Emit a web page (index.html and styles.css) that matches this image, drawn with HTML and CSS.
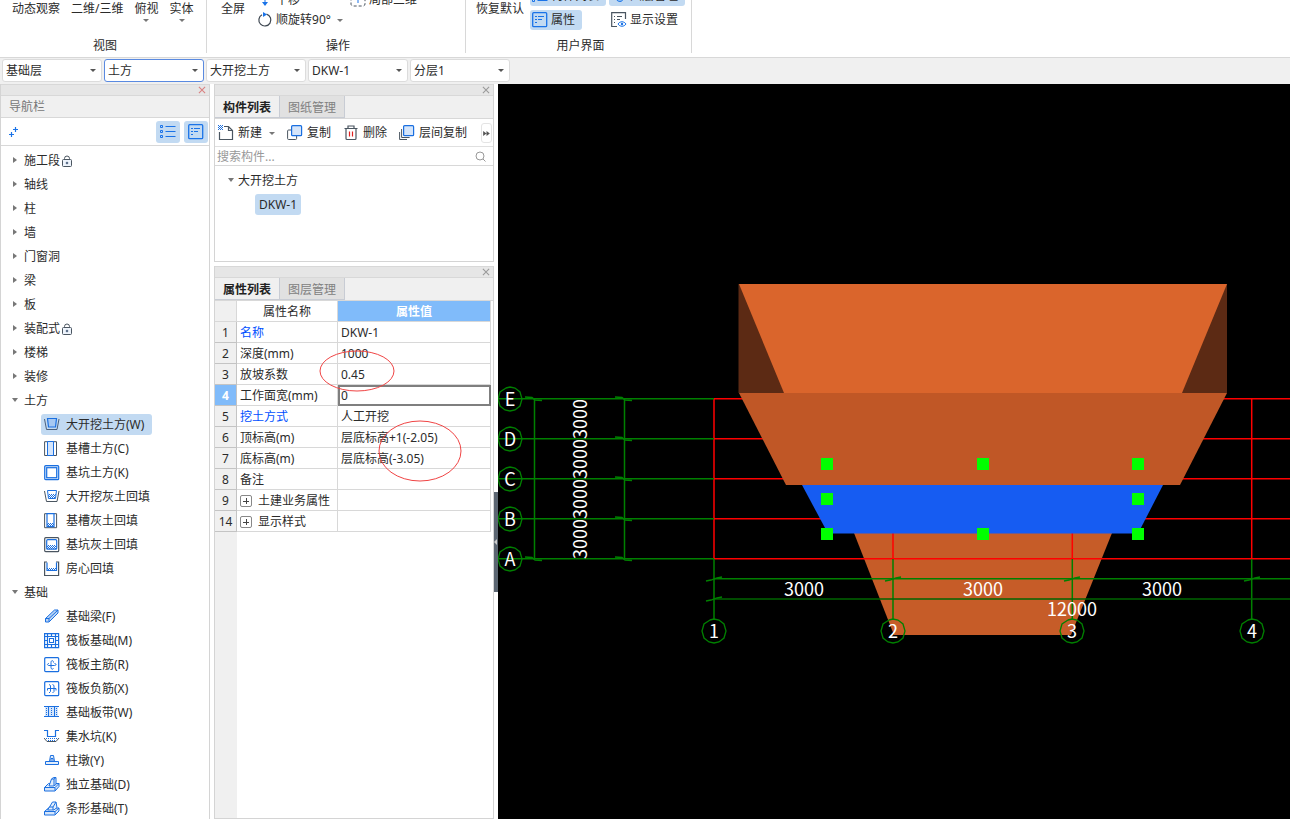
FILE: index.html
```
<!DOCTYPE html>
<html lang="zh-CN">

<head>
    <meta charset="UTF-8">
    <meta name="viewport" content="width=device-width, initial-scale=1.0">
    <title>土方建模</title>
    <link rel="stylesheet" href="styles.css">
</head>

<body>

    <!-- shared icons -->
    <svg class="sprite" aria-hidden="true">
        <defs>
            <pattern id="dots" width="2" height="2" patternUnits="userSpaceOnUse">
                <rect width="1" height="1" fill="#1a6fe0" />
                <rect x="1" y="1" width="1" height="1" fill="#1a6fe0" />
            </pattern>
        </defs>
        <symbol id="i-close" viewBox="0 0 9 9">
            <path d="M1 1l7 7M8 1l-7 7" stroke="currentColor" stroke-width="1.2" fill="none" />
        </symbol>
        <symbol id="i-lock" viewBox="0 0 10 12">
            <path d="M2.500 5V3.500a2.500 2.500 0 0 1 5 0V5" fill="none" stroke="#4a5560" />
            <rect x=".5" y="4.500" width="9" height="7" rx="1" fill="#eef4fc" stroke="#4a5560" />
            <path d="M5 6.500l1.500 1.500L5 9.500 3.500 8z" fill="#4a5f7c" />
        </symbol>
        <symbol id="i-list" viewBox="0 0 16 16">
            <g fill="none" stroke="#1a73e8">
                <path d="M5.500 2.500H15.500M5.500 7.500H15.500M5.500 12.500H15.500" />
                <path d="M.5 1.500h2v2h-2zM.5 6.500h2v2h-2zM.5 11.500h2v2h-2z" />
            </g>
        </symbol>
        <symbol id="i-panel" viewBox="0 0 16 16">
            <g fill="none" stroke="#1a73e8">
                <rect x=".7" y=".7" width="14" height="14" rx="1" stroke-width="1.300" />
                <path d="M3 4.500h2M6 4.500h6M3 7.500h2M6 7.500h4M3 10.500h2" />
            </g>
        </symbol>
        <symbol id="i-display" viewBox="0 0 16 16">
            <path d="M6 14.500H.7V.7h13.800V7" fill="none" stroke="#4a5560" stroke-width="1.200" />
            <path d="M3 4.500h1M6 4.500h5M3 7.500h1M6 7.500h3M3 10.500h1" stroke="#4a5560" />
            <path d="M7 12c2-3 6-3 8 0-2 3-6 3-8 0z" fill="#fff" stroke="#1a73e8" />
            <circle cx="11" cy="12" r="1.200" fill="#1a73e8" />
        </symbol>
        <symbol id="i-layers" viewBox="0 0 16 16">
            <path d="M4 9c2 6 8 6 9 0z" fill="#8bbcf2" stroke="#1a73e8" />
            <circle cx="8.500" cy="10" r="2" fill="#1a73e8" />
        </symbol>
        <symbol id="i-rotate" viewBox="0 0 16 16">
            <path d="M9.500 2.200a6 6 0 1 1-4.500.5" fill="none" stroke="#3d4650" stroke-width="1.200" />
            <path d="M6 0l4 2.500-4 2.500z" fill="#1a73e8" />
        </symbol>
        <symbol id="i-move" viewBox="0 0 14 16">
            <path d="M7 1v12M1 7h12" stroke="#1a73e8" fill="none" />
            <path d="M4 10h6l-3 4z" fill="#1a73e8" />
        </symbol>
        <symbol id="i-part" viewBox="0 0 16 16">
            <rect x="1" y="2" width="14" height="12" rx="2" fill="none" stroke="#4a5560" stroke-dasharray="3 2" />
            <path d="M8 6v5" stroke="#1a73e8" fill="none" />
        </symbol>
        <symbol id="i-new" viewBox="0 0 16 16">
            <path d="M6 1.500H10.500l4 4v9H1.500V7M10.500 1.500v4h4" fill="none" stroke="#4a5560" stroke-width="1.200" />
            <rect width="5" height="5" fill="url(#dots)" />
        </symbol>
        <symbol id="i-copy" viewBox="0 0 16 16">
            <rect x=".6" y="5" width="9" height="9.500" rx="1" fill="#fff" stroke="#4a5560" />
            <rect x="4.600" y=".7" width="10" height="10" rx="1" fill="#d5e5fa" stroke="#1a6fe0" stroke-width="1.200" />
        </symbol>
        <symbol id="i-delete" viewBox="0 0 16 16">
            <path d="M1.500 3.500h13M5 3.500V1h6v2.500M3 3.500v10q0 1 1 1h8q1 0 1-1v-10" fill="none" stroke="#4a5560" stroke-width="1.200" />
            <path d="M6.500 6.500v5M9.500 6.500v5" stroke="#e02020" stroke-width="1.200" />
        </symbol>
        <symbol id="i-floors" viewBox="0 0 16 16">
            <path d="M.6 7v7.500H8M2.600 4v8.500h8" fill="none" stroke="#4a5560" />
            <rect x="4.600" y=".7" width="10" height="10" rx="1" fill="#d5e5fa" stroke="#1a6fe0" stroke-width="1.200" />
        </symbol>
        <symbol id="i-search" viewBox="0 0 11 11">
            <circle cx="5" cy="5" r="4" fill="none" stroke="#999" />
            <path d="M8 8l2.500 2.500" stroke="#999" />
        </symbol>

        <symbol id="i-pit-open" viewBox="0 0 16 16">
            <path d="M.5 2l2 10.500h10.500l2-10.500" fill="none" stroke="#4a5f7c" />
            <path d="M3.500 1.500h9l-1 8.500h-7z" fill="#a6c8f2" stroke="#1a6fe0" stroke-width="1.200" />
        </symbol>
        <symbol id="i-trench" viewBox="0 0 16 16">
            <path d="M4 .7H.6v13.800H4M9 .7h3.500v13.800H9" fill="none" stroke="#4a5560" />
            <path d="M3.500 .5h6v14h-6z" fill="#d5e5fa" stroke="#1a6fe0" />
        </symbol>
        <symbol id="i-pit" viewBox="0 0 16 16">
            <rect x=".7" y=".7" width="14" height="14" rx="1" fill="#d5e5fa" stroke="#1a6fe0" stroke-width="1.200" />
            <rect x="2.700" y="2.700" width="10" height="10" fill="#fff" stroke="#1a6fe0" stroke-width="1.200" />
        </symbol>
        <symbol id="i-fill-open" viewBox="0 0 16 16">
            <path d="M.5 2l2 10.500h10.500l2-10.500" fill="none" stroke="#4a5560" />
            <path d="M3.500 1.500h9l-1 8h-7z" fill="#fff" stroke="#1a6fe0" />
            <path d="M4 5h8l-1 4H5z" fill="url(#dots)" />
        </symbol>
        <symbol id="i-fill-trench" viewBox="0 0 16 16">
            <path d="M3 .7H.6v14h12V.7H10" fill="none" stroke="#4a5560" />
            <path d="M3 .7v13h7V.7z" fill="none" stroke="#1a6fe0" stroke-width="1.200" />
            <rect x="3" y="10" width="7" height="4" fill="url(#dots)" />
        </symbol>
        <symbol id="i-fill-pit" viewBox="0 0 16 16">
            <rect x=".7" y=".7" width="14" height="14" rx="1" fill="none" stroke="#4a5560" stroke-width="1.200" />
            <rect x="2.700" y="2.700" width="10" height="9.500" rx="1" fill="none" stroke="#1a6fe0" stroke-width="1.200" />
            <rect x="3" y="8" width="9" height="4" fill="url(#dots)" />
        </symbol>
        <symbol id="i-room" viewBox="0 0 16 16">
            <path d="M3 1H.6v13.500h14V1H12" fill="none" stroke="#4a5560" stroke-width="1.200" />
            <path d="M3 1.500v8h9.500v-8" fill="none" stroke="#1a6fe0" stroke-width="1.200" />
            <rect x="3" y="7" width="9" height="3" fill="url(#dots)" />
        </symbol>
        <symbol id="i-beam" viewBox="0 0 16 16">
            <path d="M1.500 9.500l9-8.500h3.500v3l-9 9H1.500z" fill="#b9d4f6" stroke="#1a6fe0" />
            <path d="M1.500 9.500H5v3M5 9.500l9-8.500" fill="none" stroke="#1a6fe0" />
        </symbol>
        <symbol id="i-raft" viewBox="0 0 16 16">
            <path d="M.6 .6h14v14h-14zM3.500 .6v14M11.500 .6v14M.6 3.500h14M.6 11.500h14M7.500 .6v3M7.500 11.500v3M.6 7.500h3M11.500 7.500h3" fill="#fff" stroke="#1a6fe0" stroke-width="1.200" />
            <rect x="5.500" y="5.500" width="4" height="4" fill="#fff" stroke="#1a6fe0" />
        </symbol>
        <symbol id="i-main-bar" viewBox="0 0 16 16">
            <g fill="none" stroke="#1a6fe0">
                <rect x=".7" y=".7" width="14" height="14" rx="1" stroke-width="1.200" />
                <path d="M5 6.500C3 6.500 3 8.500 5 8.500h5.500c2 0 2-2 0-2M9.500 5.500c0-2.500-2.500-2.500-2.500 0v5c0 2 2 2 2.500 1" />
            </g>
        </symbol>
        <symbol id="i-neg-bar" viewBox="0 0 16 16">
            <g fill="none" stroke="#1a6fe0">
                <rect x=".7" y=".7" width="14" height="14" rx="1" stroke-width="1.200" />
                <path d="M3.500 9.500v-2h8.500v2M5 3.500l1.500 1v6L5 12M8.500 3.500l1.500 1v6L8.500 12" />
            </g>
        </symbol>
        <symbol id="i-strip" viewBox="0 0 16 16">
            <rect x="1" y="2" width="13" height="10" fill="#d5e5fa" />
            <path d="M0 1.500h15M0 11.500h15M4.500 1.500v10M10.500 1.500v10" stroke="#1a6fe0" />
            <path d="M2.500 3v8M7.500 3v8M12.500 3v8" stroke="#1a6fe0" stroke-dasharray="1 1" />
        </symbol>
        <symbol id="i-sump" viewBox="0 0 16 16">
            <path d="M0 1.500h3.500v6h8v-6H15" fill="none" stroke="#1a6fe0" stroke-width="1.200" />
            <path d="M0 9l3 3.500h9l3-3.500" fill="none" stroke="#4a5560" />
            <path d="M2 9.500h11M4 11.500h7" stroke="#1a6fe0" stroke-dasharray="1 1" />
        </symbol>
        <symbol id="i-pier" viewBox="0 0 16 16">
            <path d="M1.500 8.500h13v3h-13zM5.500 8.500l1-6h3l1 6M7 5.500h2v3H7z" fill="#e3eefb" stroke="#1a6fe0" />
        </symbol>
        <symbol id="i-isolated" viewBox="0 0 16 16">
            <path d="M.5 10.500l4-4H15v3l-4 4.500H.5zM.5 10.500H11l4-4M11 10.500v3" fill="#d5e5fa" stroke="#1a6fe0" />
            <path d="M5 9l2.500-7 2-1.500H12v7L9.500 9zM7.500 2h2.500v7M10 2L12 .5" fill="#e3eefb" stroke="#1a6fe0" />
        </symbol>
        <symbol id="i-strip-base" viewBox="0 0 16 16">
            <path d="M.5 10.500l4-3.500H15v3l-4 4H.5zM.5 10.500H11L15 7M11 10.500v3" fill="#d5e5fa" stroke="#1a6fe0" />
            <path d="M3.500 9l2-3 3-5H12l1 5.500L10 9zM5.500 6H9v3M9 6l3-5" fill="#e3eefb" stroke="#1a6fe0" />
        </symbol>
    </svg>

    <header class="ribbon">
        <section class="group group-view">
            <div class="group-body">
                <button class="tall">动态观察</button>
                <button class="tall">二维/三维</button>
                <button class="tall">俯视<span class="caret"></span></button>
                <button class="tall">实体<span class="caret"></span></button>
            </div>
            <h2>视图</h2>
        </section>
        <section class="group group-action">
            <div class="group-body">
                <button class="tall">全屏</button>
                <div class="tools">
                    <div class="tool-row">
                        <button class="tool tool-move"><svg class="icon"><use href="#i-move" /></svg>平移</button>
                        <button class="tool"><svg class="icon"><use href="#i-part" /></svg>局部三维</button>
                    </div>
                    <div class="tool-row">
                        <button class="tool"><svg class="icon"><use href="#i-rotate" /></svg>顺旋转90°<span class="caret"></span></button>
                    </div>
                </div>
            </div>
            <h2>操作</h2>
        </section>
        <section class="group group-ui">
            <div class="group-body">
                <button class="tall">恢复默认</button>
                <div class="toggles">
                    <button class="tool on"><svg class="icon"><use href="#i-list" /></svg>构件列表</button>
                    <button class="tool on"><svg class="icon"><use href="#i-layers" /></svg>图层管理</button>
                    <button class="tool on"><svg class="icon"><use href="#i-panel" /></svg>属性</button>
                    <button class="tool"><svg class="icon"><use href="#i-display" /></svg>显示设置</button>
                </div>
            </div>
            <h2>用户界面</h2>
        </section>
    </header>

    <div class="selectors">
        <label class="picker"><select aria-label="楼层"><option>基础层</option></select></label>
        <label class="picker active"><select aria-label="构件大类"><option>土方</option></select></label>
        <label class="picker"><select aria-label="构件类型"><option>大开挖土方</option></select></label>
        <label class="picker"><select aria-label="构件"><option>DKW-1</option></select></label>
        <label class="picker"><select aria-label="分层"><option>分层1</option></select></label>
    </div>

    <main class="workspace">

        <nav class="navigator">
            <div class="strip"><button class="close close-red" aria-label="关闭"><svg><use href="#i-close" /></svg></button></div>
            <h3>导航栏</h3>
            <div class="nav-tools">
                <button class="add" aria-label="展开"><svg viewBox="0 0 10 10"><path d="M0 7.500h5M2.500 5v5M4 2.500h5M6.500 0v5" stroke="#1a73e8" stroke-width="1.200" /></svg></button>
                <button class="view on" aria-label="列表"><svg class="icon"><use href="#i-list" /></svg></button>
                <button class="view on" aria-label="面板"><svg class="icon"><use href="#i-panel" /></svg></button>
            </div>
            <ul class="tree">
                <li><button class="node">施工段<svg class="lock"><use href="#i-lock" /></svg></button></li>
                <li><button class="node">轴线</button></li>
                <li><button class="node">柱</button></li>
                <li><button class="node">墙</button></li>
                <li><button class="node">门窗洞</button></li>
                <li><button class="node">梁</button></li>
                <li><button class="node">板</button></li>
                <li><button class="node">装配式<svg class="lock"><use href="#i-lock" /></svg></button></li>
                <li><button class="node">楼梯</button></li>
                <li><button class="node">装修</button></li>
                <li>
                    <button class="node open">土方</button>
                    <ul>
                        <li><button class="leaf on"><svg class="icon"><use href="#i-pit-open" /></svg>大开挖土方(W)</button></li>
                        <li><button class="leaf"><svg class="icon"><use href="#i-trench" /></svg>基槽土方(C)</button></li>
                        <li><button class="leaf"><svg class="icon"><use href="#i-pit" /></svg>基坑土方(K)</button></li>
                        <li><button class="leaf"><svg class="icon"><use href="#i-fill-open" /></svg>大开挖灰土回填</button></li>
                        <li><button class="leaf"><svg class="icon"><use href="#i-fill-trench" /></svg>基槽灰土回填</button></li>
                        <li><button class="leaf"><svg class="icon"><use href="#i-fill-pit" /></svg>基坑灰土回填</button></li>
                        <li><button class="leaf"><svg class="icon"><use href="#i-room" /></svg>房心回填</button></li>
                    </ul>
                </li>
                <li>
                    <button class="node open">基础</button>
                    <ul>
                        <li><button class="leaf"><svg class="icon"><use href="#i-beam" /></svg>基础梁(F)</button></li>
                        <li><button class="leaf"><svg class="icon"><use href="#i-raft" /></svg>筏板基础(M)</button></li>
                        <li><button class="leaf"><svg class="icon"><use href="#i-main-bar" /></svg>筏板主筋(R)</button></li>
                        <li><button class="leaf"><svg class="icon"><use href="#i-neg-bar" /></svg>筏板负筋(X)</button></li>
                        <li><button class="leaf"><svg class="icon"><use href="#i-strip" /></svg>基础板带(W)</button></li>
                        <li><button class="leaf"><svg class="icon"><use href="#i-sump" /></svg>集水坑(K)</button></li>
                        <li><button class="leaf"><svg class="icon"><use href="#i-pier" /></svg>柱墩(Y)</button></li>
                        <li><button class="leaf"><svg class="icon"><use href="#i-isolated" /></svg>独立基础(D)</button></li>
                        <li><button class="leaf"><svg class="icon"><use href="#i-strip-base" /></svg>条形基础(T)</button></li>
                    </ul>
                </li>
            </ul>
        </nav>

        <div class="side">
            <section class="panel">
                <div class="strip"><button class="close" aria-label="关闭"><svg><use href="#i-close" /></svg></button></div>
                <div class="tabs">
                    <button class="tab current">构件列表</button>
                    <button class="tab">图纸管理</button>
                </div>
                <div class="toolbar">
                    <button><svg class="icon"><use href="#i-new" /></svg>新建<span class="caret"></span></button>
                    <button><svg class="icon"><use href="#i-copy" /></svg>复制</button>
                    <button><svg class="icon"><use href="#i-delete" /></svg>删除</button>
                    <button><svg class="icon"><use href="#i-floors" /></svg>层间复制</button>
                    <button class="more" aria-label="更多"><svg viewBox="0 0 8 6"><path d="M0 0l4 3-4 3zM4 0l4 3-4 3z" fill="#555" /></svg></button>
                </div>
                <div class="search">
                    <input type="text" aria-label="搜索构件" placeholder="搜索构件...">
                    <svg><use href="#i-search" /></svg>
                </div>
                <ul class="components">
                    <li><button class="node open">大开挖土方</button></li>
                    <li><button class="item on">DKW-1</button></li>
                </ul>
            </section>

            <section class="panel properties">
                <div class="strip"><button class="close" aria-label="关闭"><svg><use href="#i-close" /></svg></button></div>
                <div class="tabs">
                    <button class="tab current">属性列表</button>
                    <button class="tab">图层管理</button>
                </div>
                <div class="grid">
                    <table>
                        <colgroup>
                            <col class="col-no">
                            <col class="col-name">
                            <col>
                        </colgroup>
                        <thead>
                            <tr><th></th><th>属性名称</th><th class="value-head">属性值</th></tr>
                        </thead>
                        <tbody>
                            <tr><th>1</th><td class="key">名称</td><td>DKW-1</td></tr>
                            <tr><th>2</th><td>深度(mm)</td><td>1000</td></tr>
                            <tr><th>3</th><td>放坡系数</td><td>0.45</td></tr>
                            <tr class="editing"><th>4</th><td><label for="workWidth">工作面宽(mm)</label></td><td><input id="workWidth" type="text" value="0"></td></tr>
                            <tr><th>5</th><td class="key">挖土方式</td><td>人工开挖</td></tr>
                            <tr><th>6</th><td>顶标高(m)</td><td>层底标高+1(-2.05)</td></tr>
                            <tr><th>7</th><td>底标高(m)</td><td>层底标高(-3.05)</td></tr>
                            <tr><th>8</th><td>备注</td><td></td></tr>
                            <tr><th>9</th><td><button class="expand" aria-label="展开"></button>土建业务属性</td><td></td></tr>
                            <tr><th>14</th><td><button class="expand" aria-label="展开"></button>显示样式</td><td></td></tr>
                        </tbody>
                    </table>
                </div>
                <svg class="marks" aria-hidden="true">
                    <ellipse cx="142" cy="105" rx="37" ry="20" />
                    <ellipse cx="205" cy="185" rx="41" ry="30" />
                </svg>
            </section>
        </div>

        <div class="splitter"><button aria-label="收起"></button></div>

        <section class="view3d">
            <svg class="scene" role="img" aria-label="三维视图">
                <defs>
                    <path id="bubble" d="M-4 -11L0 -12L5 -11L10 -7L12 0L10 7L5 11L0 12L-5 11L-10 7L-12 0L-10 -7Z" />
                    <path id="tick-v" d="M-9 -2L-2 -1.500L1 1L8 1.500" />
                    <path id="tick-h" d="M-8 2L-3 1L3 -1L8 -2" />
                </defs>
                <g transform="translate(-498 -84)">
                    <path class="lower" d="M854 533H1112L1071 635H894z" />

                    <g class="red">
                        <path d="M714 398.700H2600M714 438.700H2600M714 478.700H2600M714 518.700H2600M714 558.700H2600" />
                        <path d="M714 399V559M893 399V559M1072.300 399V559M1251.700 399V559" />
                    </g>

                    <path class="shade" d="M738.500 284H1227V393H738.500z" />
                    <path class="back" d="M739 284H1227L1182 393H784z" />
                    <path class="front" d="M739 393H1227L1180 485H786z" />
                    <path class="picked" d="M802 485H1163L1138 533.500H828z" />

                    <g class="green">
                        <path d="M498 398.700H714M498 438.700H714M498 478.700H714M498 518.700H714M498 558.700H714" />
                        <path d="M534.500 399V559M624.500 399V559" />
                        <path d="M714 559V619M893 559V619M1072.300 559V619M1251.700 559V619" />
                        <path d="M714 578.700H2600" />
                        <path class="dim" d="M714 599H2600" />
                    </g>
                    <g class="ticks">
                        <use href="#tick-v" x="534" y="399" /><use href="#tick-v" x="534" y="559" />
                        <use href="#tick-v" x="624" y="399" /><use href="#tick-v" x="624" y="439" />
                        <use href="#tick-v" x="624" y="479" /><use href="#tick-v" x="624" y="519" />
                        <use href="#tick-v" x="624" y="559" />
                        <use href="#tick-h" x="714" y="579" /><use href="#tick-h" x="893" y="579" />
                        <use href="#tick-h" x="1072" y="579" /><use href="#tick-h" x="1252" y="579" />
                        <use href="#tick-h" x="714" y="599" />
                        <use href="#bubble" x="510" y="399" /><use href="#bubble" x="510" y="439" />
                        <use href="#bubble" x="510" y="479" /><use href="#bubble" x="510" y="519" />
                        <use href="#bubble" x="510" y="559" />
                        <use href="#bubble" x="714" y="631" /><use href="#bubble" x="893" y="631" />
                        <use href="#bubble" x="1072" y="631" /><use href="#bubble" x="1252" y="631" />
                    </g>

                    <g class="labels">
                        <text x="510" y="406">E</text>
                        <text x="510" y="446">D</text>
                        <text x="510" y="486">C</text>
                        <text x="510" y="526">B</text>
                        <text x="510" y="566">A</text>
                        <text x="714" y="638">1</text>
                        <text x="893" y="638">2</text>
                        <text x="1072" y="638">3</text>
                        <text x="1252" y="638">4</text>
                        <text x="804" y="596">3000</text>
                        <text x="983" y="596">3000</text>
                        <text x="1162" y="596">3000</text>
                        <text x="1072" y="616">12000</text>
                        <text transform="translate(587 419) rotate(-90)">3000</text>
                        <text transform="translate(587 459) rotate(-90)">3000</text>
                        <text transform="translate(587 499) rotate(-90)">3000</text>
                        <text transform="translate(587 539) rotate(-90)">3000</text>
                    </g>

                    <path class="grips" d="M821 458h12v12h-12zM977 458h12v12h-12zM1132 458h12v12h-12zM821 493h12v12h-12zM1132 493h12v12h-12zM821 528h12v12h-12zM977 528h12v12h-12zM1132 528h12v12h-12z" />
                </g>
            </svg>
        </section>
    </main>

</body>

</html>
```
FILE: styles.css
```
*, *::before, *::after {
    box-sizing: border-box;
}

body {
    margin: 0;
    height: 100vh;
    overflow: hidden;
    display: flex;
    flex-direction: column;
    background: #fff;
    color: #2b2b2b;
    font-family: "Noto Sans", "Noto Sans CJK SC", sans-serif;
    font-size: 12px;
    line-height: 20px;
}

button, input, select {
    font: inherit;
    color: inherit;
    margin: 0;
    padding: 0;
    border: none;
    background: none;
    white-space: nowrap;
}

ul {
    list-style: none;
    margin: 0;
    padding: 0;
}

h2, h3 {
    margin: 0;
    font-size: 12px;
    font-weight: normal;
}

.sprite {
    position: absolute;
    width: 0;
    height: 0;
}

.icon {
    width: 16px;
    height: 16px;
    flex: none;
}

.caret {
    border: 3px solid transparent;
    border-top-color: #777;
    border-bottom: none;
}

.on {
    background: #c2daf2;
    border-radius: 3px;
}

/* ribbon, scrolled so that only the lower rows show */

.ribbon {
    flex: none;
    display: flex;
    height: 58px;
    overflow: hidden;
    border-bottom: 1px solid #d8d8d8;
}

.group {
    display: flex;
    flex-direction: column;
    justify-content: flex-end;
    margin-bottom: 4px;
    border-right: 1px solid #d8d8d8;
}

.group h2 {
    flex: none;
    text-align: center;
    padding-left: 4px;
    margin-bottom: -3px;
}

.group-body {
    display: flex;
    height: 56px;
    flex: none;
    align-items: flex-end;
    padding-bottom: 6px;
}

.group-view {
    width: 207px;
}

.group-view .group-body {
    gap: 11px;
    padding-left: 12px;
}

.group-action {
    width: 259px;
}

.group-action .group-body {
    gap: 12px;
    padding-left: 14px;
}

.group-ui {
    width: 226px;
}

.group-ui .group-body {
    gap: 6px;
    padding-left: 10px;
}

.tall {
    height: 31px;
    display: flex;
    flex-direction: column;
    align-items: center;
}

.tools {
    display: flex;
    flex-direction: column;
}

.tool-row {
    display: flex;
}

.tool {
    display: flex;
    align-items: center;
    gap: 3px;
    height: 20px;
}

.tool .caret {
    margin-left: 3px;
}

.tool-move {
    width: 93px;
}

.toggles {
    display: grid;
    grid-template-columns: 76px 76px;
    gap: 4px 3px;
}

.toggles .tool {
    justify-self: start;
    padding: 0 7px 0 2px;
}

/* floor and component selectors */

.selectors {
    flex: none;
    display: flex;
    gap: 2px;
    height: 26px;
    padding: 1px 2px;
    background: #f0f0f0;
}

.picker {
    position: relative;
    width: 100px;
    height: 23px;
}

.picker select {
    appearance: none;
    width: 100%;
    height: 100%;
    padding-left: 3px;
    background: #fff;
    border: 1px solid #dcdcdc;
    border-radius: 3px;
}

.picker.active select {
    border-color: #5a8ae0;
}

.picker::after {
    content: "";
    position: absolute;
    top: 10px;
    right: 6px;
    border: 3px solid transparent;
    border-top-color: #555;
    border-bottom: none;
    pointer-events: none;
}

/* work area */

.workspace {
    flex: 1;
    min-height: 0;
    display: flex;
}

.strip {
    flex: none;
    display: flex;
    justify-content: flex-end;
    height: 12px;
    background: #e6e6e6;
    border-top: 1px solid #d8d8d8;
    border-bottom: 1px solid #d8d8d8;
}

.close {
    width: 14px;
    height: 10px;
    display: flex;
    align-items: center;
    justify-content: center;
    color: #999;
}

.close svg {
    width: 8px;
    height: 8px;
}

.close-red {
    color: #d98080;
}

.navigator {
    flex: none;
    width: 210px;
    margin-right: 4px;
    display: flex;
    flex-direction: column;
    border: 1px solid #d4d4d4;
    border-width: 0 1px;
    overflow: hidden;
}

.navigator h3 {
    flex: none;
    height: 22px;
    padding-left: 8px;
    background: #f0f0f0;
    border-bottom: 1px solid #d8d8d8;
    color: #777;
    line-height: 22px;
}

.nav-tools {
    flex: none;
    display: flex;
    align-items: center;
    gap: 4px;
    height: 28px;
    padding: 0 1px 0 8px;
    border-bottom: 1px solid #d8d8d8;
}

.add {
    margin-right: auto;
    display: flex;
}

.add svg {
    width: 10px;
    height: 10px;
}

.view {
    display: flex;
    align-items: center;
    justify-content: center;
    width: 24px;
    height: 22px;
}

.tree {
    padding-top: 2px;
}

.node, .leaf {
    display: flex;
    align-items: center;
    height: 24px;
}

.node {
    gap: 2px;
    padding: 2px 0 0 12px;
}

.node::before {
    content: "";
    margin: 0 5px 2px 0;
    border: 3px solid transparent;
    border-left: 4px solid #777;
    border-right: none;
}

.node.open::before {
    margin: 0 4px 2px -1px;
    border: 3px solid transparent;
    border-top: 4px solid #777;
    border-bottom: none;
}

.lock {
    width: 10px;
    height: 12px;
}

.leaf {
    gap: 6px;
    height: 21px;
    margin: 0 0 3px 40px;
    padding: 0 8px 0 3px;
}

.tree ul {
    padding-top: 2px;
    margin-bottom: -2px;
}

.side {
    flex: none;
    width: 280px;
    display: flex;
    flex-direction: column;
    gap: 4px;
}

.panel {
    border: 1px solid #d4d4d4;
    border-top: none;
}

.tabs {
    display: flex;
    height: 23px;
    background: #f0f0f0;
    border-bottom: 1px solid #d8d8d8;
}

.tab {
    width: 65px;
    padding-top: 2px;
    background: #e1e1e1;
    border: 1px solid #c8ccd4;
    border-left: none;
    border-top: none;
    color: #808080;
}

.tab.current {
    background: #f0f0f0;
    color: #222;
    font-weight: bold;
}

.toolbar {
    display: flex;
    align-items: center;
    gap: 12px;
    height: 28px;
    padding: 1px 0 0 3px;
    border-bottom: 1px solid #e0e0e0;
}

.toolbar button {
    display: flex;
    align-items: center;
    gap: 4px;
}

.toolbar .caret {
    margin-left: 3px;
}

.toolbar .more {
    justify-content: center;
    width: 11px;
    height: 20px;
    margin: 0 1px 0 auto;
    border: 1px solid #e4e4e4;
    border-radius: 3px;
}

.more svg {
    width: 7px;
    height: 5px;
    flex: none;
}

.search {
    display: flex;
    align-items: center;
    height: 19px;
    padding: 0 7px 0 2px;
    border-bottom: 1px solid #d8d8d8;
}

.search input {
    flex: 1;
    min-width: 0;
    height: 18px;
    padding-top: 2px;
    outline: none;
}

.search input::placeholder {
    color: #999;
}

.search svg {
    width: 11px;
    height: 11px;
}

.components {
    height: 95px;
    padding-top: 2px;
}

.components .node {
    gap: 0;
    padding-left: 14px;
}

.item {
    display: block;
    height: 21px;
    margin: 2px 0 0 40px;
    padding: 0 4px;
}

.properties {
    position: relative;
    flex: 1;
    min-height: 0;
    display: flex;
    flex-direction: column;
}

/* the number column runs on below the last row */
.grid {
    flex: 1;
    padding-right: 2px;
    background: linear-gradient(to right, #f0f0f0 22px, #fff 22px);
}

.grid table {
    width: 100%;
    table-layout: fixed;
    border-collapse: separate;
    border-spacing: 0;
}

.col-no {
    width: 22px;
}

.col-name {
    width: 101px;
}

.grid th, .grid td {
    height: 21px;
    padding: 2px 0 0 3px;
    border: 1px solid #d8d8d8;
    border-width: 0 1px 1px 0;
    line-height: 18px;
    text-align: left;
    font-weight: normal;
    white-space: nowrap;
}

.grid th {
    padding: 2px 0 0;
    text-align: center;
}

.grid thead th:nth-child(2) {
    background: #fff;
}

.grid tbody th {
    border-color: #c4c4c4;
}

.grid .value-head {
    background: #80bbfa;
    color: #fff;
    font-weight: bold;
}

.key {
    color: #0050ff;
}

.grid .editing th {
    background: #80bbfa;
    color: #fff;
    font-weight: bold;
}

.grid .editing td:last-child {
    padding: 0;
    border: none;
}

.editing input {
    display: block;
    width: 100%;
    height: 21px;
    padding-left: 1px;
    border: 2px solid #7f7f7f;
    background: #fff;
}

.expand {
    width: 12px;
    height: 12px;
    margin: 0 6px 0 0;
    vertical-align: -1px;
    border: 1px solid #888;
    border-radius: 2px;
    background:
        linear-gradient(#444, #444) center / 6px 1px no-repeat,
        linear-gradient(#444, #444) center / 1px 6px no-repeat;
}

.marks {
    position: absolute;
    top: 0;
    left: 0;
    width: 100%;
    height: 100%;
    fill: none;
    stroke: #f04444;
    pointer-events: none;
}

.splitter {
    flex: none;
    width: 4px;
}

.splitter button {
    display: flex;
    align-items: center;
    width: 4px;
    height: 100px;
    margin-top: 408px;
    background: #5c6672;
}

.splitter button::before {
    content: "";
    border: 3px solid transparent;
    border-right-color: #ccc;
    border-left: none;
}

/* 3D view */

.view3d {
    flex: 1;
    min-width: 0;
    background: #000;
}

.scene {
    display: block;
    width: 100%;
    height: 100%;
}

.lower {
    fill: #c65c28;
}

.shade {
    fill: #5c2a14;
}

.back {
    fill: #da652c;
}

.front {
    fill: #c05726;
}

.picked {
    fill: #165cf2;
}

.grips {
    fill: #0f0;
}

.red {
    stroke: #f00;
    stroke-width: 1.5;
}

.green {
    stroke: #008000;
    stroke-width: 1.5;
}

.dim {
    stroke: #006400;
}

.ticks {
    fill: none;
    stroke: #008000;
    stroke-width: 1.3;
}

.labels {
    fill: #fff;
    font-family: "Noto Sans CJK SC", sans-serif;
    font-size: 18px;
    text-anchor: middle;
}
```
